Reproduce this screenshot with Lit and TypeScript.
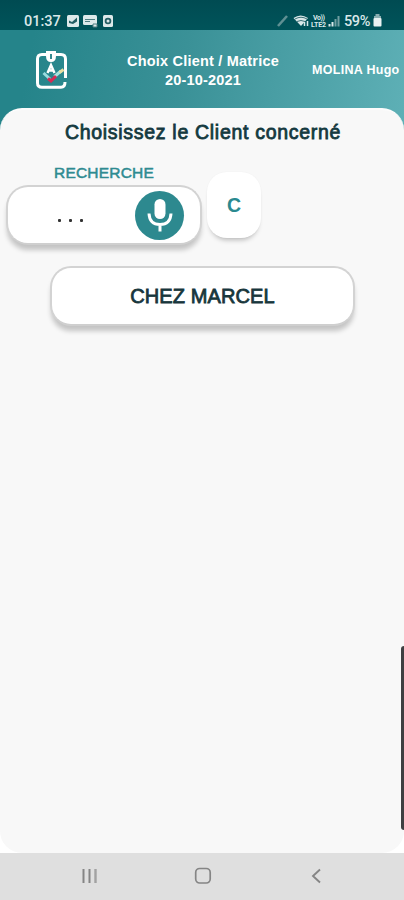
import { LitElement, html, css } from "lit";
import { customElement } from "lit/decorators.js";

@customElement("app-root")
export class AppRoot extends LitElement {
  static styles = css`
    :host {
      display: flex;
      flex-direction: column;
      width: 404px;
      height: 900px;
      overflow: hidden;
      position: relative;
      background: #fff;
      font-family: "Liberation Sans", Arial, sans-serif;
    }
    * { box-sizing: border-box; }
    svg { display: block; flex: none; }
    .status {
      flex: none;
      height: 30px;
      background: linear-gradient(#004b52, #00545a);
      display: flex;
      align-items: flex-start;
      padding: 13px 22px 0 24px;
      color: #d9e8e9;
      font: 500 14.500px/17px Roboto, sans-serif;
    }
    .clock { width: 42px; }
    .space { flex: 1; }
    .percent { margin-left: 3px; width: 29px; letter-spacing: -0.4px; }
    .header {
      flex: none;
      height: 100px;
      margin-bottom: -22px;
      padding-bottom: 22px;
      background: linear-gradient(100deg, #25848a 8%, #3a9197 45%, #5eb0b6 100%);
      display: grid;
      grid-template-columns: 102px 202px 100px;
      align-items: center;
      color: #fff;
      font-weight: bold;
    }
    .logo { margin-left: 34px; }
    .heading {
      text-align: center;
      font-size: 14.5px;
      letter-spacing: 0.2px;
      line-height: 19px;
      padding-top: 3px;
      white-space: nowrap;
    }
    .user { font-size: 12.5px; letter-spacing: 0.3px; padding: 2px 0 0 8px; white-space: nowrap; }
    .panel {
      flex: none;
      height: 745px;
      border-radius: 22px;
      background: #f8f8f8;
      border-top: 2px solid #fcfcfc;
      display: flex;
      flex-direction: column;
      position: relative;
    }
    .title {
      text-align: center;
      font-size: 19.500px;
      letter-spacing: 0.7px;
      -webkit-text-stroke: 0.8px #14393f;
      line-height: 22px;
      color: #14393f;
      margin-top: 11px;
      white-space: nowrap;
      padding-left: 2px;
    }
    .row { display: flex; margin-top: 20px; padding-left: 6px; height: 82px; }
    .search { width: 196px; }
    .label {
      height: 22px;
      text-align: center;
      font-size: 15.500px;
      letter-spacing: 0.2px;
      line-height: 19px;
      color: #2f8b91;
      -webkit-text-stroke: 0.5px #2f8b91;
    }
    .field, .client {
      border: 2px solid #d3d3d3;
      border-bottom-color: #cfcfcf;
      background: #fff;
      box-shadow: 0 6px 5px -1px rgba(0, 0, 0, 0.21);
    }
    .field {
      height: 60px;
      border-radius: 22px;
      display: flex;
      align-items: center;
      padding: 0 15px 0 50px;
      justify-content: space-between;
    }
    .dots { display: flex; gap: 8px; padding-top: 11px; }
    .dots i { width: 3px; height: 3px; background: #333; border-radius: 1px; }
    .clear {
      width: 54px;
      height: 66px;
      margin: 9px 0 0 5px;
      border-radius: 20px;
      background: #fff;
      box-shadow: 0 5px 5px -3px rgba(0, 0, 0, 0.25), 0 0 2px rgba(0, 0, 0, 0.04);
      color: #2a898f;
      font-size: 19.5px;
      font-weight: bold;
      line-height: 67px;
      text-align: center;
    }
    .client {
      margin: 21px 49px 0 50px;
      height: 60px;
      border-radius: 21px;
      text-align: center;
      font-size: 20px;
      letter-spacing: 0.1px;
      -webkit-text-stroke: 0.8px #17363c;
      line-height: 57px;
      color: #17363c;
    }
    .edge {
      position: absolute;
      right: 0;
      top: 646px;
      width: 3px;
      height: 184px;
      background: #3e3f41;
      border-radius: 4px 0 0 4px;
    }
    .nav {
      flex: none;
      height: 47px;
      background: #dfdfdf;
      display: flex;
      align-items: center;
      justify-content: space-between;
      padding: 0 82px 1px 81px;
    }
    .home { margin-left: -3px; }
  `;

  render() {
    return html`
      <div class="status">
        <span class="clock">01:37</span>
        <svg width="50" height="16" viewBox="0 0 50 16">
          <g fill="#dce9ea">
            <rect x="1" y="2" width="12" height="12" rx="1.5" />
            <rect x="17" y="2" width="14" height="10" rx="1.5" />
            <rect x="37" y="2" width="10" height="12" rx="1.5" />
          </g>
          <path d="M3 7.500l3 1.500 5-4.500v4l-4 2.500-4-1z" fill="#245e64" />
          <path d="M19 6.5h10M19 8.5h5M27 11h4v3h-4z" stroke="#4f7e82" stroke-width="1" fill="#dce9ea" />
          <circle cx="42" cy="8" r="2.4" fill="none" stroke="#245e64" stroke-width="1.8" />
        </svg>
        <span class="space"></span>
        <svg width="64" height="16" viewBox="0 0 64 16">
          <path d="M1 13L10 3" stroke="#5f9093" stroke-width="2.6" />
          <path d="M16.500 5q7-5 14.500 0l-7 8z" fill="#d9e8e9" />
          <path d="M18 6q6-3.500 12 0M20 8.500q4-2 8 0" fill="none" stroke="#286168" stroke-width="0.9" />
          <path d="M27.500 13V9M30.500 8v5" stroke="#d9e8e9" stroke-width="1.500" />
          <g fill="#d9e8e9" font-family="Roboto, sans-serif" font-weight="700" font-size="7">
            <text x="36" y="7" textLength="12">Vo))</text>
            <text x="34" y="13.500" textLength="15">LTE2</text>
          </g>
          <path d="M52.500 13.500v-2.500M55.500 13.500V9" stroke="#d9e8e9" stroke-width="2" />
          <path d="M58.500 13.500V6M61.500 13.500V3" stroke="#719ea1" stroke-width="2" />
        </svg>
        <span class="percent">59%</span>
        <svg width="9" height="14" viewBox="0 0 9 14">
          <path d="M2.500 2h4M1 4h7" stroke="#8aaeb1" stroke-width="2.200" />
          <rect x="0.500" y="5" width="8" height="8.500" rx="1" fill="#e9f2f2" />
        </svg>
      </div>

      <div class="header">
        <svg class="logo" width="36" height="42" viewBox="34 47 36 42">
          <path d="M47 53.500H42Q37.500 53.500 37.500 58V82Q37.500 86.300 42 86.300H61Q65 86.300 65 81M55 53.500H61Q65.500 53.500 65.500 58V77"
            fill="none" stroke="#fff" stroke-width="3" />
          <path d="M46 50h10v5q0 6-5 6t-5-6z" fill="#fff" />
          <path d="M51 53v5" stroke="#358b91" stroke-width="2" />
          <path d="M47.500 72L51 64l3.500 8M49 69.500h4" fill="none" stroke="#fff" stroke-width="2.400" />
          <path d="M43.500 72l6.500 6" stroke="#9bdce0" stroke-width="3" />
          <path d="M54.500 75.500L61 70" stroke="#a7e2df" stroke-width="3" />
          <path d="M59.500 71.500l4-3" stroke="#e8dfa1" stroke-width="3" />
          <path d="M48 77.500l3 2.500 5-5" fill="none" stroke="#d92a54" stroke-width="3" />
        </svg>
        <div class="heading">Choix Client / Matrice<br />20-10-2021</div>
        <div class="user">MOLINA Hugo</div>
      </div>

      <main class="panel">
        <div class="title">Choisissez le Client concerné</div>
        <div class="row">
          <div class="search">
            <div class="label">RECHERCHE</div>
            <div class="field">
              <span class="dots"><i></i><i></i><i></i></span>
              <svg width="50" height="50" viewBox="0 0 50 50">
                <circle cx="24.500" cy="25.500" r="24.500" fill="#2d898f" />
                <rect x="19.500" y="9" width="11" height="20" rx="5.500" fill="#fff" />
                <path d="M14 23.500Q14.500 34.500 25 34.500T36 23.500M25 34.500v7" fill="none" stroke="#fff" stroke-width="3" />
              </svg>
            </div>
          </div>
          <div class="clear">C</div>
        </div>
        <div class="client">CHEZ MARCEL</div>
      </main>

      <nav class="nav">
        <svg width="17" height="16" viewBox="0 0 17 16">
          <path d="M2.500 1v14M8.500 1v14" stroke="#858585" stroke-width="2" />
          <path d="M14.500 1v14" stroke="#a2a2a2" stroke-width="2.400" />
        </svg>
        <svg class="home" width="18" height="18" viewBox="0 0 18 18">
          <rect x="1.700" y="1.500" width="14.500" height="14.500" rx="4" fill="none" stroke="#858585" stroke-width="1.700" />
        </svg>
        <svg width="12" height="16" viewBox="0 0 12 16">
          <path d="M10 1.500L3 8l7 6.500" fill="none" stroke="#858585" stroke-width="1.900" />
        </svg>
      </nav>
      <div class="edge"></div>
    `;
  }
}
